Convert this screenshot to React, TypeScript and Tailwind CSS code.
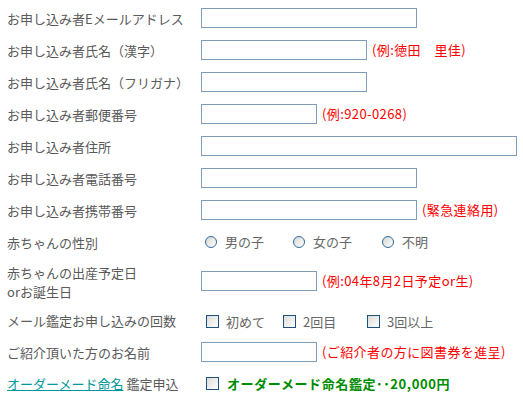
import React from "react";

const font = { fontFamily: '"MS PGothic", "Noto Sans CJK JP", "Noto Sans", sans-serif' };

function Input({ w }: { w: string }) {
  return <div className={`${w} h-[20px] border border-[#7f9db9] bg-white shrink-0`} />;
}

function Note({ children }: { children: React.ReactNode }) {
  return <span className="ml-[5px] text-[#ff0000] text-[13px] tracking-[0.4px] whitespace-nowrap">{children}</span>;
}

function Radio({ label, w }: { label: string; w: string }) {
  return (
    <div className={`flex items-center ${w}`}>
      <span className="w-[12px] h-[12px] rounded-full border border-[#2f6ba0] bg-gradient-to-br from-[#d6d6d0] to-[#ffffff] shrink-0" />
      <span className="ml-[8px] text-[13px] text-[#666666]">{label}</span>
    </div>
  );
}

function Check({ label, w }: { label: string; w: string }) {
  return (
    <div className={`flex items-center ${w}`}>
      <span className="w-[13px] h-[13px] border border-[#1c5180] bg-gradient-to-br from-[#dcdcd7] to-[#ffffff] shrink-0" />
      <span className="ml-[7px] text-[13px] text-[#666666]">{label}</span>
    </div>
  );
}

function Row({ h, label, children }: { h: string; label: React.ReactNode; children: React.ReactNode }) {
  return (
    <div className={`flex items-center ${h}`}>
      <div className="w-[194px] shrink-0 text-[13px] text-[#5a5a5a] leading-[17px]">{label}</div>
      <div className="flex items-center">{children}</div>
    </div>
  );
}

export default function App() {
  return (
    <div className="w-[523px] h-[397px] bg-white pl-[7px] pt-[2px] overflow-hidden" style={font}>
      <Row h="h-[32px]" label="お申し込み者Eメールアドレス">
        <Input w="w-[216px]" />
      </Row>
      <Row h="h-[32px]" label="お申し込み者氏名（漢字）">
        <Input w="w-[166px]" />
        <Note>(例:徳田　里佳)</Note>
      </Row>
      <Row h="h-[32px]" label="お申し込み者氏名（フリガナ）">
        <Input w="w-[166px]" />
      </Row>
      <Row h="h-[32px]" label="お申し込み者郵便番号">
        <Input w="w-[116px]" />
        <Note>(例:920-0268)</Note>
      </Row>
      <Row h="h-[32px]" label="お申し込み者住所">
        <Input w="w-[316px]" />
      </Row>
      <Row h="h-[32px]" label="お申し込み者電話番号">
        <Input w="w-[216px]" />
      </Row>
      <Row h="h-[32px]" label="お申し込み者携帯番号">
        <Input w="w-[216px]" />
        <Note>(緊急連絡用)</Note>
      </Row>
      <Row h="h-[32px]" label="赤ちゃんの性別">
        <div className="flex items-center pl-[4px]">
          <Radio label="男の子" w="w-[88px]" />
          <Radio label="女の子" w="w-[89px]" />
          <Radio label="不明" w="w-[60px]" />
        </div>
      </Row>
      <Row
        h="h-[46px]"
        label={
          <div className="flex flex-col leading-[19px] pt-[2px]">
            <span>赤ちゃんの出産予定日</span>
            <span>orお誕生日</span>
          </div>
        }
      >
        <Input w="w-[116px]" />
        <Note>(例:04年8月2日予定or生)</Note>
      </Row>
      <Row h="h-[32px]" label="メール鑑定お申し込みの回数">
        <div className="flex items-center pl-[5px] pt-[3px]">
          <Check label="初めて" w="w-[77px]" />
          <Check label="2回目" w="w-[84px]" />
          <Check label="3回以上" w="w-[70px]" />
        </div>
      </Row>
      <Row h="h-[32px]" label="ご紹介頂いた方のお名前">
        <Input w="w-[116px]" />
        <Note>(ご紹介者の方に図書券を進呈)</Note>
      </Row>
      <Row
        h="h-[31px]"
        label={
          <>
            <a href="#" className="text-[#00979c] underline">オーダーメード命名</a> 鑑定申込
          </>
        }
      >
        <div className="flex items-center pl-[5px]">
          <span className="w-[13px] h-[13px] border border-[#1c5180] bg-gradient-to-br from-[#dcdcd7] to-[#ffffff] shrink-0" />
          <span className="ml-[8px] text-[13px] font-bold tracking-[0.6px] text-[#008c00] whitespace-nowrap">
            オーダーメード命名鑑定･･20,000円
          </span>
        </div>
      </Row>
    </div>
  );
}
